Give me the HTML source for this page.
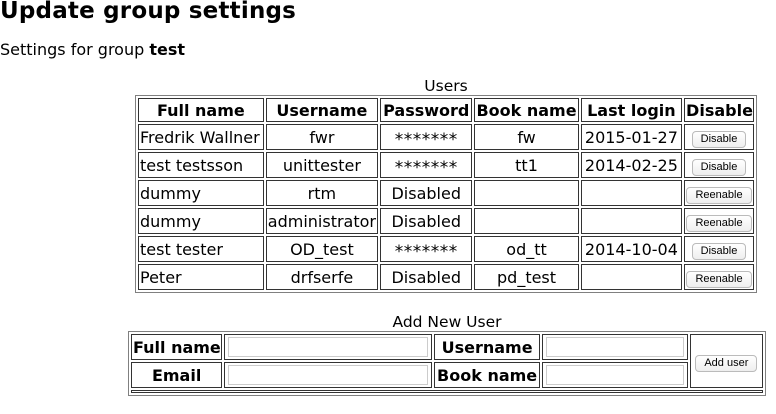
<!DOCTYPE html>
<html><head><meta charset="utf-8"><style>
body{margin:0;background:#fff;font-family:"DejaVu Sans","Liberation Sans",sans-serif;color:#000;width:776px;height:414px;overflow:hidden;position:relative}
h1{position:absolute;left:0;top:-2px;margin:0;font-size:23px;font-weight:bold;letter-spacing:0.2px}
.sub{position:absolute;left:0;top:40px;font-size:16px}
.cap{position:absolute;font-size:15.5px;text-align:center}
table{position:absolute;border:1px solid #808080;border-spacing:2px;border-collapse:separate;table-layout:fixed;font-size:16px}
td,th{border:1px solid #333;padding:0 1px;white-space:nowrap;overflow:hidden}
th{font-weight:bold;text-align:center}
td{text-align:center}
td.l{text-align:left}
.st span{font-size:17px;letter-spacing:0.5px;position:relative;top:3px}
.btn{display:inline-block;font-size:11px;border:1px solid #bbb;border-radius:4px;padding:1px 8px;background:linear-gradient(#fff,#eee);line-height:13px;font-family:"Liberation Sans",sans-serif}
.inp{display:block;height:18px;border:1px solid #ccc;margin:0 2px}
</style></head><body>
<h1>Update group settings</h1>
<div class="sub">Settings for group <b>test</b></div>
<div class="cap" style="left:135px;width:622px;top:77px">Users</div>
<table style="left:135px;top:95px;width:622px">
<colgroup><col style="width:124px"><col style="width:111px"><col style="width:91px"><col style="width:103px"><col style="width:100px"><col style="width:69px"></colgroup>
<tr style="height:24px"><th>Full name</th><th>Username</th><th>Password</th><th>Book name</th><th>Last login</th><th>Disable</th></tr>
<tr style="height:26px"><td class="l">Fredrik Wallner</td><td>fwr</td><td class="st"><span>*******</span></td><td>fw</td><td>2015-01-27</td><td><span class="btn">Disable</span></td></tr>
<tr style="height:26px"><td class="l">test testsson</td><td>unittester</td><td class="st"><span>*******</span></td><td>tt1</td><td>2014-02-25</td><td><span class="btn">Disable</span></td></tr>
<tr style="height:26px"><td class="l">dummy</td><td>rtm</td><td>Disabled</td><td></td><td></td><td><span class="btn">Reenable</span></td></tr>
<tr style="height:26px"><td class="l">dummy</td><td>administrator</td><td>Disabled</td><td></td><td></td><td><span class="btn">Reenable</span></td></tr>
<tr style="height:26px"><td class="l">test tester</td><td>OD_test</td><td class="st"><span>*******</span></td><td>od_tt</td><td>2014-10-04</td><td><span class="btn">Disable</span></td></tr>
<tr style="height:26px"><td class="l">Peter</td><td>drfserfe</td><td>Disabled</td><td>pd_test</td><td></td><td><span class="btn">Reenable</span></td></tr>
</table>
<div class="cap" style="left:128px;width:638px;top:313px">Add New User</div>
<table style="left:128px;top:331px;width:638px">
<colgroup><col style="width:91px"><col style="width:207px"><col style="width:106px"><col style="width:145px"><col style="width:73px"></colgroup>
<tr style="height:26px"><th>Full name</th><td><span class="inp"></span></td><th>Username</th><td><span class="inp"></span></td><td rowspan="2"><span class="btn">Add user</span></td></tr>
<tr style="height:26px"><th>Email</th><td><span class="inp"></span></td><th>Book name</th><td><span class="inp"></span></td></tr>
<tr style="height:3px"><td colspan="5" style="padding:0;height:1px"></td></tr>
</table>
</body></html>
